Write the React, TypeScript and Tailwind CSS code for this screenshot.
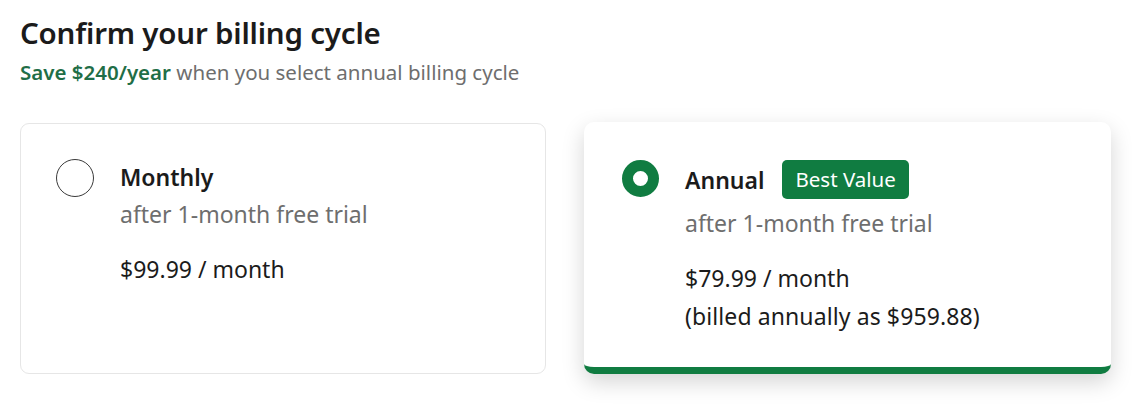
import React from "react";

const font = { fontFamily: '"Noto Sans", "Open Sans", sans-serif' };

function Radio({ checked }: { checked: boolean }) {
  if (checked) {
    return <div className="w-[37px] h-[37px] shrink-0 rounded-full border-[11px] border-[#107c41] bg-white" />;
  }
  return <div className="w-[38px] h-[38px] shrink-0 rounded-full border border-[#3a3a3a] bg-white" />;
}

export default function App() {
  return (
    <div className="w-[1132px] h-[408px] bg-white text-[#1b1b1b] px-5 pt-[13px]" style={font}>
      <h1 className="text-[29.5px] leading-[40px] font-semibold tracking-[-0.2px]">Confirm your billing cycle</h1>
      <p className="text-[20.5px] leading-[30px] mt-[4px] text-[#6e6e6e]">
        <span className="font-semibold text-[#1f6e47]">Save $240/year</span> when you select annual billing cycle
      </p>
      <div className="flex gap-[38px] mt-[36px]">
        <div className="w-[526px] h-[251px] rounded-[9px] border border-[#e6e6e6] bg-white pl-[35px] pt-[35px] flex items-start gap-[26px]">
          <Radio checked={false} />
          <div className="flex flex-col">
            <div className="text-[23px] leading-[36px] font-semibold">Monthly</div>
            <div className="text-[23px] leading-[30px] mt-[4px] text-[#6e6e6e]">after 1-month free trial</div>
            <div className="text-[23px] leading-[30px] mt-[25px] text-[#1b1b1b]">$99.99 / month</div>
          </div>
        </div>
        <div className="w-[527px] h-[252px] -mt-[1px] rounded-[10px] bg-white border-b-[7px] border-[#107c41] shadow-[0_8px_22px_rgba(0,0,0,0.17)] pl-[38px] pt-[38px] flex items-start gap-[26px]">
          <Radio checked={true} />
          <div className="flex flex-col">
            <div className="flex items-center h-[39px] gap-[18px]">
              <span className="text-[23px] leading-[36px] font-semibold">Annual</span>
              <span className="h-[39px] px-[13px] rounded-[5px] bg-[#107c41] text-white text-[20.5px] leading-[39px]">Best Value</span>
            </div>
            <div className="text-[23px] leading-[30px] mt-[9px] text-[#6e6e6e]">after 1-month free trial</div>
            <div className="text-[23px] leading-[30px] mt-[25px]">$79.99 / month</div>
            <div className="text-[23px] leading-[30px] mt-[8px] tracking-[0.1px]">(billed annually as $959.88)</div>
          </div>
        </div>
      </div>
    </div>
  );
}
